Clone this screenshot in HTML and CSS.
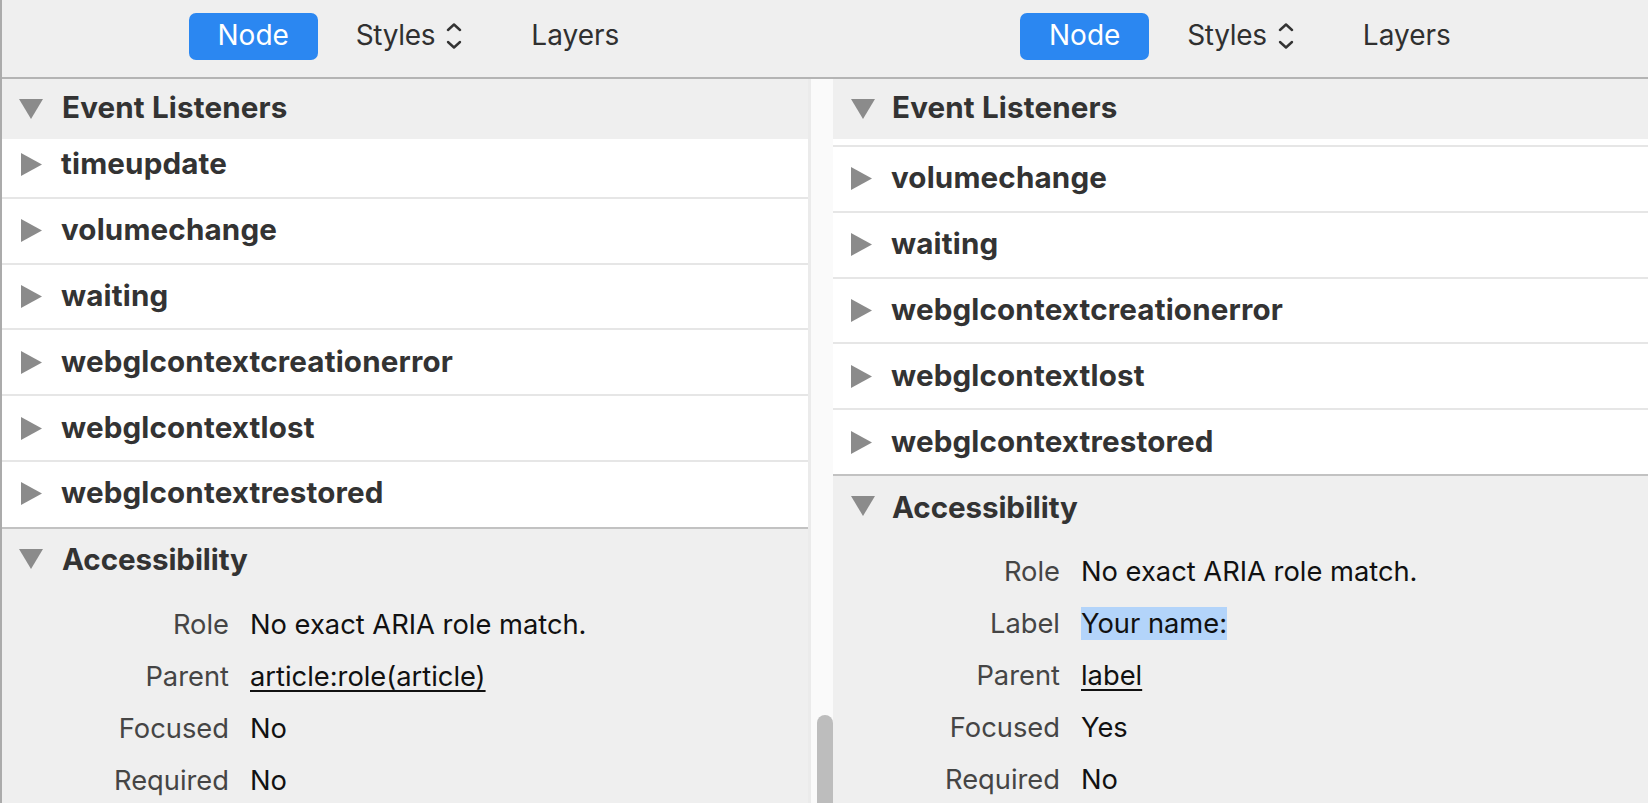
FILE: index.html
```html
<!DOCTYPE html>
<html lang="en">
<head>
<meta charset="utf-8">
<title>Inspector</title>
<link rel="stylesheet" href="styles.css">
</head>
<body>
<div class="app">
  <div class="pane pane-left">
    <div class="toolbar toolbar-left">
      <div class="tab tab-active">Node</div>
      <div class="tab tab-styles">Styles
        <svg class="chev" width="16" height="28" viewBox="0 0 16 28"><path d="M2 7 L8 1.5 L14 7" /><path d="M2 19 L8 24.5 L14 19" /></svg>
      </div>
      <div class="tab tab-layers">Layers</div>
    </div>
    <div class="body">
      <div class="content">
        <div class="sec-head">
          <svg class="tri-down" width="24" height="20" viewBox="0 0 24 20"><polygon points="0,0 24,0 12,20"/></svg>
          <span>Event Listeners</span>
        </div>
        <div class="list">
          <div class="rows rows-left">
            <div class="row"><svg class="tri-right" width="21" height="23" viewBox="0 0 21 23"><polygon points="0,0 21,11.5 0,23"/></svg><span>timeupdate</span></div>
            <div class="row"><svg class="tri-right" width="21" height="23" viewBox="0 0 21 23"><polygon points="0,0 21,11.5 0,23"/></svg><span>volumechange</span></div>
            <div class="row"><svg class="tri-right" width="21" height="23" viewBox="0 0 21 23"><polygon points="0,0 21,11.5 0,23"/></svg><span>waiting</span></div>
            <div class="row"><svg class="tri-right" width="21" height="23" viewBox="0 0 21 23"><polygon points="0,0 21,11.5 0,23"/></svg><span>webglcontextcreationerror</span></div>
            <div class="row"><svg class="tri-right" width="21" height="23" viewBox="0 0 21 23"><polygon points="0,0 21,11.5 0,23"/></svg><span>webglcontextlost</span></div>
            <div class="row"><svg class="tri-right" width="21" height="23" viewBox="0 0 21 23"><polygon points="0,0 21,11.5 0,23"/></svg><span>webglcontextrestored</span></div>
          </div>
        </div>
        <div class="access">
          <div class="sec-head sec-head-acc">
            <svg class="tri-down" width="24" height="20" viewBox="0 0 24 20"><polygon points="0,0 24,0 12,20"/></svg>
            <span>Accessibility</span>
          </div>
          <div class="props">
            <div class="k">Role</div><div class="v">No exact ARIA role match.</div>
            <div class="k">Parent</div><div class="v"><span class="link">article:role(article)</span></div>
            <div class="k">Focused</div><div class="v">No</div>
            <div class="k">Required</div><div class="v">No</div>
          </div>
        </div>
      </div>
      <div class="scrollbar"><div class="thumb"></div></div>
    </div>
  </div>

  <div class="pane pane-right">
    <div class="toolbar toolbar-right">
      <div class="tab tab-active">Node</div>
      <div class="tab tab-styles">Styles
        <svg class="chev" width="16" height="28" viewBox="0 0 16 28"><path d="M2 7 L8 1.5 L14 7" /><path d="M2 19 L8 24.5 L14 19" /></svg>
      </div>
      <div class="tab tab-layers">Layers</div>
    </div>
    <div class="body">
      <div class="content">
        <div class="sec-head sec-head-right">
          <svg class="tri-down" width="24" height="20" viewBox="0 0 24 20"><polygon points="0,0 24,0 12,20"/></svg>
          <span>Event Listeners</span>
        </div>
        <div class="list list-right">
          <div class="rows rows-right">
            <div class="row-peek"></div>
            <div class="row"><svg class="tri-right" width="21" height="23" viewBox="0 0 21 23"><polygon points="0,0 21,11.5 0,23"/></svg><span>volumechange</span></div>
            <div class="row"><svg class="tri-right" width="21" height="23" viewBox="0 0 21 23"><polygon points="0,0 21,11.5 0,23"/></svg><span>waiting</span></div>
            <div class="row"><svg class="tri-right" width="21" height="23" viewBox="0 0 21 23"><polygon points="0,0 21,11.5 0,23"/></svg><span>webglcontextcreationerror</span></div>
            <div class="row"><svg class="tri-right" width="21" height="23" viewBox="0 0 21 23"><polygon points="0,0 21,11.5 0,23"/></svg><span>webglcontextlost</span></div>
            <div class="row"><svg class="tri-right" width="21" height="23" viewBox="0 0 21 23"><polygon points="0,0 21,11.5 0,23"/></svg><span>webglcontextrestored</span></div>
          </div>
        </div>
        <div class="access">
          <div class="sec-head sec-head-right sec-head-acc">
            <svg class="tri-down" width="24" height="20" viewBox="0 0 24 20"><polygon points="0,0 24,0 12,20"/></svg>
            <span>Accessibility</span>
          </div>
          <div class="props props-right">
            <div class="k">Role</div><div class="v">No exact ARIA role match.</div>
            <div class="k">Label</div><div class="v"><span class="sel">Your name:</span></div>
            <div class="k">Parent</div><div class="v"><span class="link">label</span></div>
            <div class="k">Focused</div><div class="v">Yes</div>
            <div class="k">Required</div><div class="v">No</div>
          </div>
        </div>
      </div>
    </div>
  </div>
</div>
</body>
</html>
```

FILE: styles.css
```css
* { box-sizing: border-box; }
html, body {
  margin: 0;
  padding: 0;
  width: 1648px;
  height: 803px;
  overflow: hidden;
  background: #efefef;
}
body {
  font-family: Inter, "Liberation Sans", sans-serif;
  color: #333;
}
.app {
  display: flex;
  width: 1648px;
  height: 803px;
}
.pane {
  display: flex;
  flex-direction: column;
  height: 803px;
}
.pane-left {
  width: 833px;
  border-left: 2px solid #ababab;
}
.pane-right {
  flex: 1;
  min-width: 0;
}

/* toolbar */
.toolbar {
  height: 79px;
  flex: none;
  background: #efefef;
  border-bottom: 2px solid #b4b4b4;
  display: flex;
  align-items: center;
  justify-content: center;
  padding-bottom: 4px;
  font-size: 28px;
  color: #303030;
}
.toolbar-left { padding-right: 27px; }
.toolbar-right { padding-right: 10px; }
.tab {
  display: flex;
  align-items: center;
}
.tab-styles, .tab-layers { margin-top: -4px; }
.tab-active {
  width: 129px;
  height: 47px;
  justify-content: center;
  background: #2b87f1;
  color: #fff;
  border-radius: 7px;
  margin-right: 38px;
  padding-bottom: 3px;
}
.tab-styles { gap: 11px; letter-spacing: -0.3px; }
.chev {
  fill: none;
  stroke: #333;
  stroke-width: 2.4;
  stroke-linecap: round;
  stroke-linejoin: round;
  margin-top: 4px;
}
.tab-layers { margin-left: 69px; }

/* body */
.body {
  flex: 1;
  display: flex;
  min-height: 0;
}
.content {
  flex: 1;
  min-width: 0;
  display: flex;
  flex-direction: column;
}
.scrollbar {
  width: 25px;
  flex: none;
  background: #fafafa;
  border-left: 3px solid #ebebeb;
  display: flex;
  justify-content: flex-end;
  padding-top: 636px;
}
.thumb {
  width: 16px;
  height: 100px;
  border-radius: 8px;
  background: #bdbdbd;
}

.sec-head {
  height: 60px;
  flex: none;
  display: flex;
  align-items: center;
  padding-left: 17px;
  gap: 19px;
  background: #efefef;
  font-weight: 700;
  font-size: 29.6px;
  letter-spacing: 0.15px;
  color: #333;
}
.sec-head > span { margin-top: -4px; }
.sec-head-right { padding-left: 18px; gap: 17px; }
.sec-head-acc { letter-spacing: -0.1px; }
.sec-head-acc > span { margin-top: 1px; }
.tri-down { fill: #8b8b8b; flex: none; }
.tri-right { fill: #8b8b8b; flex: none; }

.list {
  flex: none;
  height: 387.6px;
  overflow: hidden;
  background: #fff;
}
.list-right { height: 335.3px; }
.rows-left { margin-top: -6px; }
.row-peek {
  height: 8px;
  border-bottom: 2px solid #e6e6e6;
}
.row {
  height: 65.8px;
  border-bottom: 2px solid #e6e6e6;
  display: flex;
  align-items: center;
  padding-left: 19px;
  gap: 19px;
  font-weight: 700;
  font-size: 29.6px;
  letter-spacing: 0.15px;
  color: #333;
}
.row > span { margin-top: -3px; }
.rows-right .row { padding-left: 18px; gap: 19px; }
.row:last-child { border-bottom: none; height: 63.8px; }

.access {
  flex: 1;
  border-top: 2px solid #c2c2c2;
  background: #efefef;
}
.props {
  display: grid;
  grid-template-columns: 227px 1fr;
  column-gap: 21px;
  grid-auto-rows: 52px;
  padding-top: 9.5px;
  font-size: 27.3px;
}
.k {
  text-align: right;
  color: #454545;
  display: flex;
  align-items: center;
  justify-content: flex-end;
}
.v {
  color: #111;
  display: flex;
  align-items: center;
}
.link {
  text-decoration: underline;
  text-decoration-thickness: 2px;
  text-underline-offset: 4px;
}
.sel {
  background: #b3d4fa;
  height: 33px;
  line-height: 33px;
  display: inline-block;
}
```
